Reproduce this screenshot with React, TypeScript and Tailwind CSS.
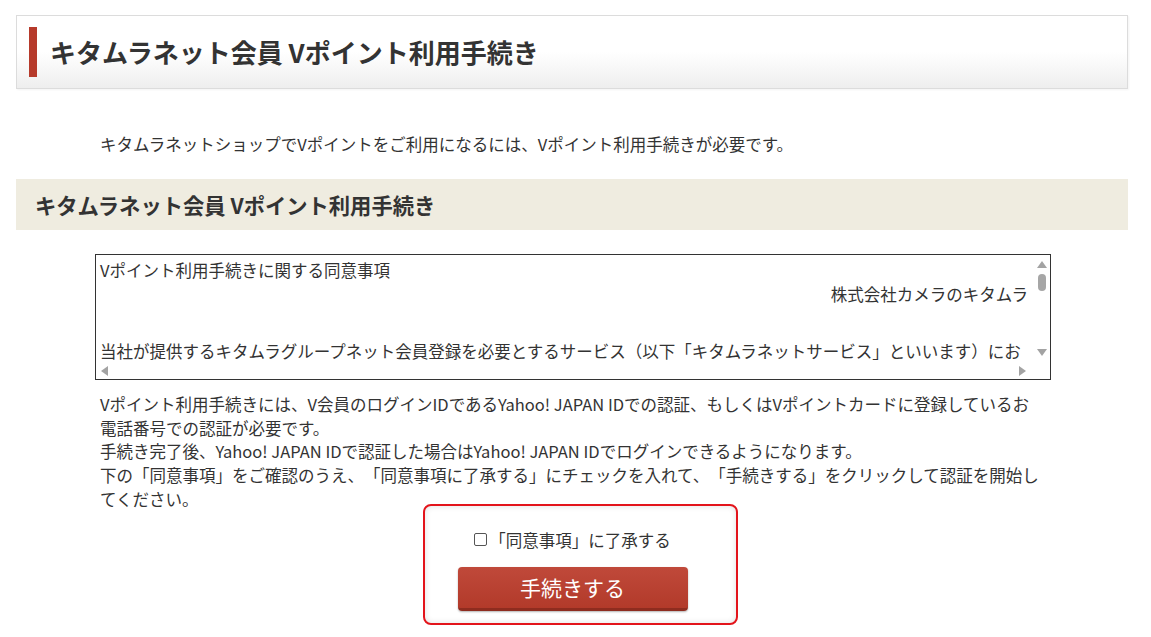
const jp = { fontFamily: '"Noto Sans CJK JP", "Noto Sans", sans-serif' };

function ScrollBox() {
  return (
    <div className="ml-[79px] w-[956px] h-[126px] border border-[#333] bg-white flex flex-col">
      <div className="flex flex-1 min-h-0">
        <div className="flex-1 overflow-hidden px-[4px] pt-[3px] text-[16.5px] leading-[24px] text-[#333] whitespace-nowrap">
          <div>Vポイント利用手続きに関する同意事項</div>
          <div className="text-right pr-[1px]">株式会社カメラのキタムラ</div>
          <div className="mt-[33px]">
            当社が提供するキタムラグループネット会員登録を必要とするサービス（以下「キタムラネットサービス」といいます）にお
          </div>
        </div>
        <div className="w-[17px] flex flex-col items-center pt-[6px] pb-[6px]">
          <svg width="10" height="7" viewBox="0 0 10 7">
            <path d="M5 0 L10 7 L0 7 Z" fill="#a3a3a3" />
          </svg>
          <div className="mt-[6px] w-[8px] h-[17px] rounded-full bg-[#a6a6a6]" />
          <div className="flex-1" />
          <svg width="10" height="7" viewBox="0 0 10 7">
            <path d="M0 0 L10 0 L5 7 Z" fill="#a3a3a3" />
          </svg>
        </div>
      </div>
      <div className="h-[17px] flex items-center pl-[5px] pr-[24px]">
        <svg width="7" height="10" viewBox="0 0 7 10">
          <path d="M7 0 L7 10 L0 5 Z" fill="#a3a3a3" />
        </svg>
        <div className="flex-1" />
        <svg width="7" height="10" viewBox="0 0 7 10">
          <path d="M0 0 L7 5 L0 10 Z" fill="#a3a3a3" />
        </svg>
      </div>
    </div>
  );
}

export default function App() {
  return (
    <div className="min-h-screen bg-white text-[#333] [text-spacing-trim:space-all]" style={jp}>
      <div className="pl-[16px] pt-[15px] w-[1128px]">
        <div className="h-[74px] border border-[#dcdcdc] bg-gradient-to-b from-white via-white to-[#eeeeee] shadow-[1px_1px_2px_rgba(0,0,0,0.05)] flex items-center pl-[12px]">
          <div className="w-[8px] h-[50px] bg-[#b63a2b]" />
          <h1 className="ml-[13px] text-[26px] font-bold leading-none text-[#333]">
            キタムラネット会員 Vポイント利用手続き
          </h1>
        </div>

        <p className="mt-[43px] pl-[84px] text-[16.5px] leading-[24px] text-[#333]">
          キタムラネットショップでVポイントをご利用になるには、Vポイント利用手続きが必要です。
        </p>

        <div className="mt-[23px] h-[51px] bg-[#efece0] flex items-center pl-[19px]">
          <h2 className="text-[21.3px] font-bold leading-none text-[#333]">
            キタムラネット会員 Vポイント利用手続き
          </h2>
        </div>

        <div className="mt-[24px]">
          <ScrollBox />
        </div>

        <p className="mt-[13px] pl-[84px] text-[16.5px] leading-[23.7px] text-[#333] whitespace-nowrap">
          Vポイント利用手続きには、V会員のログインIDであるYahoo! JAPAN IDでの認証、もしくはVポイントカードに登録しているお
          <br />
          電話番号での認証が必要です。
          <br />
          手続き完了後、Yahoo! JAPAN IDで認証した場合はYahoo! JAPAN IDでログインできるようになります。
          <br />
          下の「同意事項」をご確認のうえ、「同意事項に了承する」にチェックを入れて、「手続きする」をクリックして認証を開始し
          <br />
          てください。
        </p>

        <div className="-mt-[8px] ml-[407px] w-[315px] h-[121px] rounded-[8px] border-2 border-[#e3141b] shadow-[inset_0_0_6px_rgba(0,0,0,0.12)] flex flex-col items-center pr-[16px] pt-[24px]">
          <label className="flex items-center text-[16.5px] leading-[20px] text-[#333]">
            <span className="w-[13px] h-[13px] border border-[#555] rounded-[2px] bg-white" />
            <span className="ml-[2px]">「同意事項」に了承する</span>
          </label>
          <button className="mt-[17px] w-[230px] h-[44px] rounded-[4px] bg-gradient-to-b from-[#c0493a] to-[#b23a2a] border-b-[3px] border-[#8e2c1f] shadow-[0_1px_2px_rgba(0,0,0,0.3)] text-white text-[21px] leading-none">
            手続きする
          </button>
        </div>
      </div>
    </div>
  );
}
